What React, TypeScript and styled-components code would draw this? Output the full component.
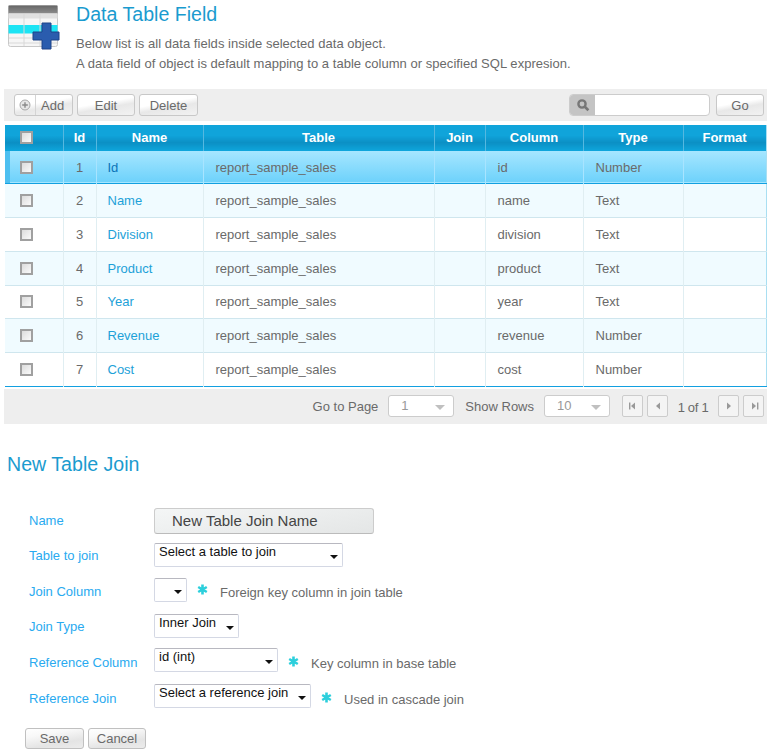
import styled, { createGlobalStyle } from "styled-components";

const fields = [
  { id: 1, name: "Id", column: "id", type: "Number" },
  { id: 2, name: "Name", column: "name", type: "Text" },
  { id: 3, name: "Division", column: "division", type: "Text" },
  { id: 4, name: "Product", column: "product", type: "Text" },
  { id: 5, name: "Year", column: "year", type: "Text" },
  { id: 6, name: "Revenue", column: "revenue", type: "Number" },
  { id: 7, name: "Cost", column: "cost", type: "Number" },
];

const rowHeights = [32, 34, 34, 34, 33, 34, 34];

const columnWidths = [58, 33, 107, 231, 51, 98, 100, 83];

function TableIcon() {
  return (
    <svg width="52" height="46" viewBox="0 0 52 46">
      <defs>
        <linearGradient id="iconHead" x1="0" y1="0" x2="0" y2="1">
          <stop offset="0" stopColor="#666" />
          <stop offset="1" stopColor="#8c8c8c" />
        </linearGradient>
        <filter id="iconSoft">
          <feGaussianBlur stdDeviation="0.4" />
        </filter>
      </defs>
      <g filter="url(#iconSoft)">
        <rect x="0.5" y="0.5" width="49" height="41" rx="2" fill="#f6f6f6" stroke="#c8c8c8" />
        <rect x="0.5" y="0.5" width="49" height="8" fill="url(#iconHead)" />
        <rect x="0.5" y="8.5" width="49" height="5" fill="#e0e0e0" />
        <rect x="0.5" y="20" width="49" height="8.5" fill="#1ce4f4" />
        <path d="M1 33h48M1 38h48M16 9v32M32 9v32" stroke="#d8d8d8" fill="none" />
        <path
          d="M34 18h9v9h8v8h-8v9h-9v-9h-9v-8h9z"
          fill="#2a5cae"
          stroke="#1e4488"
          strokeLinejoin="round"
        />
      </g>
    </svg>
  );
}

function SearchIcon() {
  return (
    <svg width="14" height="14" viewBox="0 0 14 14">
      <circle cx="6" cy="6" r="3.6" fill="none" stroke="#777" strokeWidth="2.4" />
      <path d="M8.8 8.8l3.6 3.4" stroke="#777" strokeWidth="2.6" />
    </svg>
  );
}

function AddIcon() {
  return (
    <svg width="12" height="12" viewBox="0 0 12 12">
      <circle cx="6" cy="6" r="5" fill="#e6e6e6" stroke="#a8a8a8" />
      <path d="M6 3.2v5.6M3.2 6h5.6" stroke="#8a8a8a" strokeWidth="1.4" />
    </svg>
  );
}

function StarIcon() {
  return (
    <svg width="11" height="11" viewBox="0 0 11 11">
      <path
        d="M5.5 0.5v10M1.2 3l8.6 5M1.2 8l8.6-5"
        stroke="#2ccfdc"
        strokeWidth="2.6"
        fill="none"
      />
    </svg>
  );
}

function Pager({ kind }: { kind: "first" | "prev" | "next" | "last" }) {
  const left = kind === "first" || kind === "prev";
  const bar = kind === "first" || kind === "last";
  return (
    <PagerButton>
      <svg width="10" height="10" viewBox="0 0 10 10">
        {left ? <path d="M7 1.5v7L3 5z" fill="#999" /> : <path d="M3 1.5v7L7 5z" fill="#999" />}
        {bar && <rect x={left ? 1 : 8} y="1.5" width="1.4" height="7" fill="#999" />}
      </svg>
    </PagerButton>
  );
}

function FormSelect({ label, width }: { label: string; width: number }) {
  return (
    <SelectBox style={{ width }}>
      <span>{label}</span>
      <SelectCaret />
    </SelectBox>
  );
}

export default function App() {
  return (
    <>
      <GlobalStyle />
      <Page>
        <Header>
          <IconSlot>
            <TableIcon />
          </IconSlot>
          <div>
            <Title>Data Table Field</Title>
            <Intro>
              Below list is all data fields inside selected data object.
              <br />
              A data field of object is default mapping to a table column or specified SQL expresion.
            </Intro>
          </div>
        </Header>

        <Toolbar>
          <ToolGroup $gap={4}>
            <AddButton>
              <AddSlot>
                <AddIcon />
              </AddSlot>
              <span>Add</span>
            </AddButton>
            <ToolButton $width={58}>Edit</ToolButton>
            <ToolButton $width={59}>Delete</ToolButton>
          </ToolGroup>
          <ToolGroup $gap={6}>
            <SearchBox>
              <SearchIconSlot>
                <SearchIcon />
              </SearchIconSlot>
            </SearchBox>
            <ToolButton $width={48}>Go</ToolButton>
          </ToolGroup>
        </Toolbar>

        <Grid>
          <colgroup>
            {columnWidths.map((width, index) => (
              <col key={index} style={{ width }} />
            ))}
          </colgroup>
          <thead>
            <tr>
              <HeadCell>
                <CheckBox />
              </HeadCell>
              <HeadCell>Id</HeadCell>
              <HeadCell>Name</HeadCell>
              <HeadCell>Table</HeadCell>
              <HeadCell>Join</HeadCell>
              <HeadCell>Column</HeadCell>
              <HeadCell>Type</HeadCell>
              <HeadCell>Format</HeadCell>
            </tr>
          </thead>
          <tbody>
            {fields.map((field, index) => (
              <Row
                key={field.id}
                $selected={index === 0}
                $alt={index % 2 === 1}
                $last={index === fields.length - 1}
                style={{ height: rowHeights[index] }}
              >
                <CheckCell $selected={index === 0}>
                  <CheckBox />
                </CheckCell>
                <CenterCell $selected={index === 0}>{field.id}</CenterCell>
                <NameCell $selected={index === 0}>{field.name}</NameCell>
                <Cell $selected={index === 0}>report_sample_sales</Cell>
                <Cell $selected={index === 0} />
                <Cell $selected={index === 0}>{field.column}</Cell>
                <Cell $selected={index === 0}>{field.type}</Cell>
                <Cell $selected={index === 0} />
              </Row>
            ))}
          </tbody>
        </Grid>

        <Footer>
          <FooterLabel>Go to Page</FooterLabel>
          <PageSelect>
            1<PageCaret />
          </PageSelect>
          <FooterLabel>Show Rows</FooterLabel>
          <PageSelect>
            10
            <PageCaret />
          </PageSelect>
          <PagerGroup>
            <Pager kind="first" />
            <Pager kind="prev" />
            <PageCount>1 of 1</PageCount>
            <Pager kind="next" />
            <Pager kind="last" />
          </PagerGroup>
        </Footer>

        <SectionTitle>New Table Join</SectionTitle>

        <Form>
          <FormRow $top={0} $height={26}>
            <FieldLabel $shift={1}>Name</FieldLabel>
            <NameInput>New Table Join Name</NameInput>
          </FormRow>
          <FormRow $top={9} $height={24}>
            <FieldLabel $shift={1}>Table to join</FieldLabel>
            <FormSelect label="Select a table to join" width={189} />
          </FormRow>
          <FormRow $top={11} $height={24}>
            <FieldLabel $shift={2}>Join Column</FieldLabel>
            <FormSelect label="" width={33} />
            <Star $top={6}>
              <StarIcon />
            </Star>
            <Hint $shift={3}>Foreign key column in join table</Hint>
          </FormRow>
          <FormRow $top={12} $height={24}>
            <FieldLabel $shift={1}>Join Type</FieldLabel>
            <FormSelect label="Inner Join" width={85} />
          </FormRow>
          <FormRow $top={10} $height={24}>
            <FieldLabel $shift={3}>Reference Column</FieldLabel>
            <FormSelect label="id (int)" width={124} />
            <Star $top={8}>
              <StarIcon />
            </Star>
            <Hint $shift={4}>Key column in base table</Hint>
          </FormRow>
          <FormRow $top={12} $height={24}>
            <FieldLabel $shift={3}>Reference Join</FieldLabel>
            <FormSelect label="Select a reference join" width={157} />
            <Star $top={8}>
              <StarIcon />
            </Star>
            <Hint $shift={4}>Used in cascade join</Hint>
          </FormRow>
          <FormActions>
            <FormButton $width={59}>Save</FormButton>
            <FormButton $width={58}>Cancel</FormButton>
          </FormActions>
        </Form>
      </Page>
    </>
  );
}

const GlobalStyle = createGlobalStyle`
  html, body {
    margin: 0;
    background: #fff;
  }

  body {
    font-family: "Liberation Sans", Arial, sans-serif;
    font-size: 13px;
    color: #6a6a6a;
  }
`;

const Page = styled.div`
  width: 772px;
  height: 752px;
  overflow: hidden;
  padding: 4px 5px 0 4px;
  box-sizing: border-box;
`;

const Header = styled.header`
  display: flex;
  height: 85px;
`;

const IconSlot = styled.div`
  width: 72px;
  padding: 1px 0 0 4px;
  box-sizing: border-box;
`;

const Title = styled.h1`
  margin: 0;
  font-size: 19.6px;
  line-height: 20px;
  font-weight: 400;
  color: #1a9bcf;
`;

const Intro = styled.p`
  margin: 10px 0 0;
  font-size: 13px;
  line-height: 20px;
  letter-spacing: 0.035px;
`;

const Toolbar = styled.div`
  display: flex;
  justify-content: space-between;
  align-items: center;
  height: 32px;
  padding: 0 3px 0 10px;
  background: #eee;
`;

const ToolGroup = styled.div<{ $gap: number }>`
  display: flex;
  align-items: center;
  gap: ${(p) => p.$gap}px;
`;

const ToolButton = styled.button<{ $width: number }>`
  width: ${(p) => p.$width}px;
  height: 22px;
  padding: 0;
  border: 1px solid #c8c8c8;
  border-radius: 3px;
  background: linear-gradient(170deg, #fff 0%, #fff 40%, #e8e8e8 60%, #f2f2f2 100%);
  font: 13px "Liberation Sans", Arial, sans-serif;
  color: #6a6a6a;
`;

const AddButton = styled(ToolButton).attrs({ $width: 59 })`
  display: flex;
  align-items: center;
`;

const AddSlot = styled.span`
  display: flex;
  align-items: center;
  justify-content: center;
  width: 20px;
  height: 20px;
  margin-right: 5px;
  border-right: 1px solid #d4d4d4;
`;

const SearchBox = styled.div`
  display: flex;
  width: 141px;
  height: 22px;
  box-sizing: border-box;
  border: 1px solid #ccc;
  border-radius: 4px;
  background: #fff;
  overflow: hidden;
`;

const SearchIconSlot = styled.div`
  display: flex;
  align-items: center;
  justify-content: center;
  width: 25px;
  background: #c4c4c4;
`;

const Grid = styled.table`
  width: 761px;
  margin: 4px 0 0 1px;
  border-collapse: collapse;
  table-layout: fixed;
  border-right: 1px solid #a9dff2;
`;

const HeadCell = styled.th`
  height: 26px;
  padding: 0 0 2px;
  box-sizing: border-box;
  font-size: 13px;
  font-weight: 700;
  color: #fff;
  text-align: center;
  background: linear-gradient(#10a4da 0%, #10a4da 40%, #0b8fc4 68%, #0ea6dc 100%);
  border-right: 1px solid #55b8e0;
  vertical-align: middle;

  &:last-child {
    border-right: 0;
  }

  & > span {
    margin: 0 0 0 15px;
  }
`;

const Row = styled.tr<{ $selected: boolean; $alt: boolean; $last: boolean }>`
  background: ${(p) =>
    p.$selected
      ? "linear-gradient(#a6e6ff, #6ed2fb)"
      : p.$alt
        ? "#f0fbff"
        : "#fff"};
  border-bottom: 1px solid ${(p) => (p.$selected || p.$last ? "#12a0e0" : "#cfe6ee")};

  & > td {
    padding-top: ${(p) => (p.$selected ? "1px" : "0")};
  }
`;

const Cell = styled.td<{ $selected?: boolean }>`
  padding: 0 0 0 12px;
  border-right: 1px solid ${(p) => (p.$selected ? "#a8e4ff" : "#e0eef2")};
  white-space: nowrap;
  vertical-align: middle;

  &:last-child {
    border-right: 0;
  }
`;

const CenterCell = styled(Cell)`
  padding-left: 0;
  text-align: center;
`;

const CheckCell = styled(Cell)<{ $selected: boolean }>`
  padding-left: 15px;
  box-shadow: ${(p) => (p.$selected ? "inset 5px 0 0 #4dbff0" : "none")};
`;

const NameCell = styled(Cell)<{ $selected: boolean }>`
  padding-left: 11px;
  color: ${(p) => (p.$selected ? "#0b74b8" : "#1da1d8")};
`;

const CheckBox = styled.span`
  display: block;
  width: 9px;
  height: 9px;
  border: 2px solid #a0a0a0;
  background: linear-gradient(135deg, #dcdcdc, #fafafa);
`;

const Footer = styled.div`
  display: flex;
  align-items: center;
  justify-content: flex-end;
  height: 35px;
  margin-top: 2px;
  padding-right: 3px;
  background: #eee;
`;

const FooterLabel = styled.span`
  margin-right: 10px;
`;

const PageSelect = styled.div`
  position: relative;
  width: 66px;
  height: 22px;
  margin-right: 11px;
  padding-left: 12px;
  box-sizing: border-box;
  line-height: 20px;
  border: 1px solid #ccc;
  border-radius: 3px;
  background: #fff;
  color: #999;
`;

const PageCaret = styled.span`
  position: absolute;
  right: 8px;
  top: 9px;
  border-left: 5px solid transparent;
  border-right: 5px solid transparent;
  border-top: 5px solid #c0c0c0;
`;

const PagerGroup = styled.div`
  display: flex;
  align-items: center;
  gap: 4px;
  margin-left: 1px;
`;

const PagerButton = styled.span`
  display: flex;
  align-items: center;
  justify-content: center;
  width: 21px;
  height: 22px;
  box-sizing: border-box;
  border: 1px solid #ccc;
  border-radius: 2px;
  background: #f4f4f4;
`;

const PageCount = styled.span`
  width: 42px;
  margin-top: 2px;
  text-align: center;
  letter-spacing: -0.3px;
`;

const SectionTitle = styled.h2`
  margin: 29px 0 0 3px;
  font-size: 19.6px;
  line-height: 22px;
  font-weight: 400;
  color: #1a9bcf;
`;

const Form = styled.div`
  padding: 33px 0 0 25px;
`;

const FormRow = styled.div<{ $top: number; $height: number }>`
  display: flex;
  align-items: flex-start;
  height: ${(p) => p.$height}px;
  margin-top: ${(p) => p.$top}px;
`;

const FieldLabel = styled.span<{ $shift: number }>`
  width: 125px;
  margin-top: ${(p) => p.$shift}px;
  line-height: 24px;
  color: #29aaf0;
`;

const NameInput = styled.div`
  width: 220px;
  height: 26px;
  padding-left: 17px;
  box-sizing: border-box;
  line-height: 24px;
  font-size: 15px;
  color: #444;
  border: 1px solid #ccc;
  border-bottom-color: #bbb;
  border-radius: 3px;
  background: linear-gradient(170deg, #f4f6f6, #e4e6e6);
`;

const SelectBox = styled.div`
  position: relative;
  display: flex;
  height: 24px;
  padding: 0 0 0 4px;
  box-sizing: border-box;
  border: 1px solid #d4d8e4;
  border-top-color: #b8b8c0;
  border-radius: 2px;
  background: #fff;
  color: #111;
  white-space: nowrap;
`;

const SelectCaret = styled.span`
  position: absolute;
  right: 4px;
  top: 11px;
  border-left: 4px solid transparent;
  border-right: 4px solid transparent;
  border-top: 4px solid #111;
`;

const Star = styled.span<{ $top: number }>`
  display: flex;
  margin: ${(p) => p.$top}px 0 0 10px;
`;

const Hint = styled.span<{ $shift: number }>`
  margin: ${(p) => p.$shift}px 0 0 12px;
  line-height: 24px;
`;

const FormActions = styled.div`
  display: flex;
  gap: 4px;
  margin: 20px 0 0 -4px;
`;

const FormButton = styled.button<{ $width: number }>`
  width: ${(p) => p.$width}px;
  height: 21px;
  padding: 0;
  border: 1px solid #c0c0c0;
  border-radius: 3px;
  background: linear-gradient(170deg, #fff 0%, #f8f8f8 30%, #e4e4e4 70%, #ececec 100%);
  font: 13px "Liberation Sans", Arial, sans-serif;
  color: #6a6a6a;
`;
